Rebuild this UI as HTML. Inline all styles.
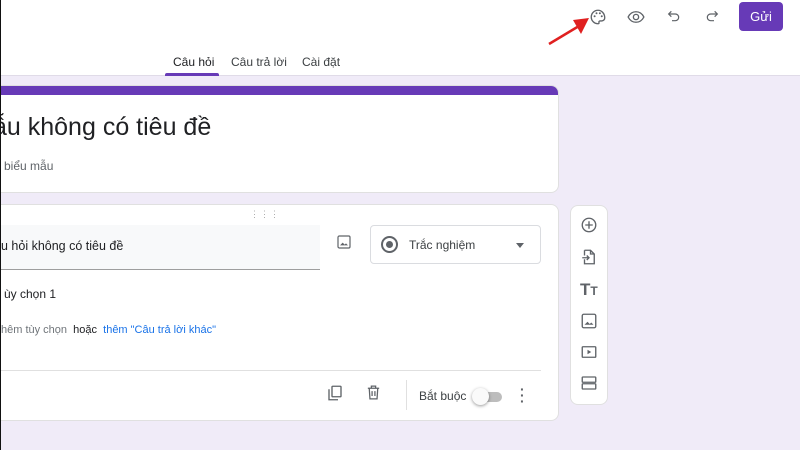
<!DOCTYPE html>
<html><head><meta charset="utf-8"><style>
*{margin:0;padding:0;box-sizing:border-box}
body{width:800px;height:450px;overflow:hidden;background:#f0ebf8;font-family:"Liberation Sans",Arial,sans-serif;position:relative;color:#202124}
.hdr{position:absolute;left:0;top:0;width:800px;height:76px;background:#fff;border-bottom:1px solid #e0dbe8}
.edge{position:absolute;left:0;top:0;width:1px;height:450px;background:#111;z-index:5}
.tab{position:absolute;top:55px;font-size:12px;color:#3c4043}
.card{position:absolute;background:#fff;border-radius:8px;border:1px solid #e0e0e0}
svg{position:absolute}
.ic{fill:none;stroke:#5f6368;stroke-width:1.8}
</style></head><body>
<div class="edge"></div>
<div class="hdr">
 <div class="tab" style="left:173px;color:#202124">Câu hỏi</div>
 <div style="position:absolute;left:165px;top:73px;width:54px;height:3px;background:#673ab7;border-radius:2px 2px 0 0"></div>
 <div class="tab" style="left:231px">Câu trả lời</div>
 <div class="tab" style="left:302px">Cài đặt</div>
 <div style="position:absolute;left:739px;top:2px;width:44px;height:29px;background:#673ab7;border-radius:4px;color:#fff;font-size:13px;text-align:center;line-height:29px">Gửi</div>
</div>
<svg style="left:589px;top:8px" width="18" height="18" viewBox="0 0 24 24"><path class="ic" d="M12 3a9 9 0 0 0 0 18c1.2 0 1.6-.8 1.3-1.6-.4-1 .2-2.2 1.5-2.2H17a4 4 0 0 0 4-4c0-5.6-4-10.2-9-10.2z"/><circle cx="7.5" cy="11" r="1.3" fill="#5f6368"/><circle cx="10" cy="7" r="1.3" fill="#5f6368"/><circle cx="14.5" cy="7" r="1.3" fill="#5f6368"/><circle cx="17" cy="11" r="1.3" fill="#5f6368"/></svg>
<svg style="left:545px;top:14px" width="50" height="34" viewBox="0 0 50 34"><line x1="4" y1="30" x2="34" y2="12" stroke="#e02020" stroke-width="2.5"/><polygon points="44,4 28,6 36,20" fill="#e02020"/></svg>
<svg style="left:627px;top:8px" width="18" height="18" viewBox="0 0 24 24"><path class="ic" d="M1.5 12C4 7 8 5 12 5s8 2 10.5 7C20 17 16 19 12 19s-8-2-10.5-7z"/><circle class="ic" cx="12" cy="12" r="3.5"/></svg>
<svg style="left:666px;top:8px" width="16" height="16" viewBox="0 0 24 24"><path class="ic" stroke-width="2.2" d="M8 5L4 9l4 4M4 9h10a5 5 0 0 1 0 10H9"/></svg>
<svg style="left:704px;top:8px" width="16" height="16" viewBox="0 0 24 24"><path class="ic" stroke-width="2.2" d="M16 5l4 4-4 4M20 9H10a5 5 0 0 0 0 10h5"/></svg>

<div class="card" style="left:-10px;top:85px;width:569px;height:108px;overflow:hidden">
 <div style="height:9px;background:#673ab7"></div>
 <div style="position:absolute;left:2px;top:27px;font-size:25px;color:#202124">ẫu không có tiêu đề</div>
 <div style="position:absolute;left:13px;top:73px;font-size:12px;color:#5f6368">biểu mẫu</div>
</div>

<div class="card" style="left:-10px;top:204px;width:569px;height:217px">
 <div style="position:absolute;left:259px;top:4px;color:#aaa;font-size:9px;letter-spacing:1px">⋮⋮⋮</div>
 <div style="position:absolute;left:0;top:20px;width:329px;height:45px;background:#f8f9fa;border-bottom:1px solid #9e9e9e"></div>
 <div style="position:absolute;left:10px;top:34px;font-size:12.5px">u hỏi không có tiêu đề</div>
 <div style="position:absolute;left:379px;top:20px;width:171px;height:39px;border:1px solid #dadce0;border-radius:4px">
  <div style="position:absolute;left:10px;top:10px;width:17px;height:17px;border:2px solid #5f6368;border-radius:50%"><div style="margin:3px;width:7px;height:7px;background:#5f6368;border-radius:50%"></div></div>
  <div style="position:absolute;left:38px;top:12px;font-size:12px;color:#3c4043">Trắc nghiệm</div>
  <div style="position:absolute;left:145px;top:17px;border:4px solid transparent;border-top:5px solid #5f6368"></div>
 </div>
 <div style="position:absolute;left:13px;top:82px;font-size:12px">ùy chọn 1</div>
 <div style="position:absolute;left:10px;top:119px;font-size:11px;color:#70757a">hêm tùy chọn&nbsp; <span style="color:#202124">hoặc</span>&nbsp; <span style="color:#1a73e8">thêm "Câu trả lời khác"</span></div>
 <div style="position:absolute;left:10px;top:165px;width:540px;height:1px;background:#e0e0e0"></div>
 <div style="position:absolute;left:415px;top:175px;width:1px;height:30px;background:#e0e0e0"></div>
 <div style="position:absolute;left:428px;top:184px;font-size:12px;color:#3c4043">Bắt buộc</div>
 <div style="position:absolute;left:485px;top:187px;width:26px;height:10px;background:#bdbdbd;border-radius:5px"></div>
 <div style="position:absolute;left:481px;top:183px;width:17px;height:17px;background:#fafafa;border-radius:50%;box-shadow:0 1px 3px rgba(0,0,0,.4)"></div>
 <div style="position:absolute;left:529px;top:181px;font-size:14px;color:#5f6368;font-weight:bold;line-height:6px">·<br>·<br>·</div>
</div>
<svg style="left:336px;top:234px" width="16" height="16" viewBox="0 0 24 24"><rect class="ic" x="3" y="3" width="18" height="18" rx="2"/><path d="M6 17l4-4 3 3 2-2 3 3z" fill="#5f6368"/></svg>
<svg style="left:326px;top:384px" width="18" height="18" viewBox="0 0 24 24"><path class="ic" d="M4 7v14h12"/><rect class="ic" x="8" y="3" width="12" height="14" rx="1"/></svg>
<svg style="left:365px;top:384px" width="17" height="17" viewBox="0 0 24 24"><path class="ic" d="M4 6h16M9 6V3h6v3M6 6l1 15h10l1-15M10 10v7M14 10v7"/></svg>

<div class="card" style="left:570px;top:205px;width:38px;height:200px"></div>
<svg style="left:580px;top:216px" width="18" height="18" viewBox="0 0 24 24"><circle class="ic" cx="12" cy="12" r="9"/><path class="ic" d="M12 7v10M7 12h10"/></svg>
<svg style="left:580px;top:248px" width="18" height="18" viewBox="0 0 24 24"><path class="ic" d="M6 3h8l5 5v13H6v-6M6 10V3M14 3v5h5M3 13h9M9 10l3 3-3 3"/></svg>
<div style="position:absolute;left:580px;top:280px;font-size:17px;font-weight:bold;color:#5f6368">T<span style="font-size:12px">T</span></div>
<svg style="left:580px;top:312px" width="18" height="18" viewBox="0 0 24 24"><rect class="ic" x="3" y="3" width="18" height="18" rx="2"/><path d="M6 17l4-4 3 3 2-2 3 3z" fill="#5f6368"/></svg>
<svg style="left:580px;top:343px" width="18" height="18" viewBox="0 0 24 24"><rect class="ic" x="3" y="5" width="18" height="14" rx="1"/><path d="M10 9l5 3-5 3z" fill="#5f6368"/></svg>
<svg style="left:580px;top:374px" width="18" height="18" viewBox="0 0 24 24"><rect class="ic" x="3" y="4" width="18" height="7" rx="1"/><rect class="ic" x="3" y="13" width="18" height="7" rx="1"/></svg>
</body></html>
